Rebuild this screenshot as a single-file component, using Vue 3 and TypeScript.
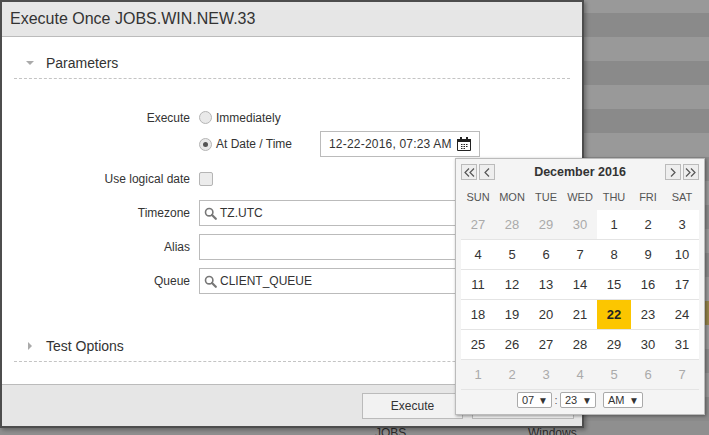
<script setup lang="ts">
interface Day {
  label: number
  outside: boolean
  selected: boolean
}

const weekdays = ['SUN', 'MON', 'TUE', 'WED', 'THU', 'FRI', 'SAT']

const before = [27, 28, 29, 30]
const after = [1, 2, 3, 4, 5, 6, 7]

const days: Day[] = [
  ...before.map((label) => ({ label, outside: true, selected: false })),
  ...Array.from({ length: 31 }, (_, i) => ({ label: i + 1, outside: false, selected: i + 1 === 22 })),
  ...after.map((label) => ({ label, outside: true, selected: false }))
]

// background table stripes behind the modal
const stripes = Array.from({ length: 17 }, (_, i) => i)
</script>

<template>
  <div class="stage">
    <div class="backdrop">
      <div class="stripe first"></div>
      <div
        v-for="i in stripes"
        :key="i"
        class="stripe"
        :class="{ dark: i % 2 === 0, flagged: i === 12 }"
      ></div>
      <div class="stripe last">
        <span class="cell-jobs">JOBS</span>
        <span class="cell-os">Windows</span>
      </div>
    </div>

    <div class="dialog">
      <header class="dialog-head">Execute Once JOBS.WIN.NEW.33</header>

      <div class="dialog-body">
        <div class="section-head">
          <span class="arrow-down"></span>
          <span>Parameters</span>
        </div>

        <div class="form">
          <div class="row">
            <label class="label tall">Execute</label>
            <div class="options">
              <div class="option first-option">
                <span class="radio"></span>
                <span class="nudge-down">Immediately</span>
              </div>
              <div class="option">
                <span class="radio checked"></span>
                <span class="option-text">At Date / Time</span>
                <div class="date-input">
                  <span class="date-value">12-22-2016, 07:23 AM</span>
                  <svg class="cal-icon" width="16" height="16" viewBox="0 0 16 16">
                    <path d="M1.500 3.500h13v11h-13z" fill="none" stroke="#222" stroke-width="1" />
                    <path d="M1 3h14v3H1z" fill="#222" />
                    <path d="M4 1h2v3H4zM10 1h2v3h-2z" fill="#222" />
                    <path d="M5 8h1.500v1H5zM7.500 8H9v1H7.500zM10 8h1.500v1H10zM5 10h1.500v1H5zM7.500 10H9v1H7.500zM10 10h1.500v1H10zM5 12h1.500v1H5zM7.500 12H9v1H7.500z" fill="#222" />
                  </svg>
                </div>
              </div>
            </div>
          </div>

          <div class="row logical">
            <label class="label">Use logical date</label>
            <span class="checkbox"></span>
          </div>

          <div class="row">
            <label class="label">Timezone</label>
            <div class="text-input">
              <svg class="search" width="13" height="13" viewBox="0 0 13 13">
                <circle cx="5.200" cy="5.200" r="3.700" fill="none" stroke="#777" stroke-width="1.600" />
                <path d="M8 8l3.800 3.800" stroke="#777" stroke-width="2.200" stroke-linecap="round" />
              </svg>
              <span>TZ.UTC</span>
            </div>
          </div>

          <div class="row">
            <label class="label">Alias</label>
            <div class="text-input"></div>
          </div>

          <div class="row">
            <label class="label">Queue</label>
            <div class="text-input">
              <svg class="search" width="13" height="13" viewBox="0 0 13 13">
                <circle cx="5.200" cy="5.200" r="3.700" fill="none" stroke="#777" stroke-width="1.600" />
                <path d="M8 8l3.800 3.800" stroke="#777" stroke-width="2.200" stroke-linecap="round" />
              </svg>
              <span>CLIENT_QUEUE</span>
            </div>
          </div>
        </div>

        <div class="section-head test-options">
          <span class="arrow-right"></span>
          <span>Test Options</span>
        </div>
      </div>

      <footer class="dialog-foot">
        <button class="btn">Execute</button>
        <button class="btn"></button>
      </footer>
    </div>

    <!-- Date picker popup -->
    <div class="calendar">
      <div class="cal-head">
        <div class="nav">
          <button class="nav-btn">
            <svg width="11" height="9" viewBox="0 0 11 9"><path d="M5 .5 1 4.500l4 4M10 .5 6 4.500l4 4" fill="none" stroke="#555" stroke-width="1.200" /></svg>
          </button>
          <button class="nav-btn">
            <svg width="6" height="9" viewBox="0 0 6 9"><path d="M5 .5 1 4.500l4 4" fill="none" stroke="#555" stroke-width="1.200" /></svg>
          </button>
        </div>
        <div class="cal-title">December 2016</div>
        <div class="nav">
          <button class="nav-btn">
            <svg width="6" height="9" viewBox="0 0 6 9"><path d="M1 .5l4 4-4 4" fill="none" stroke="#555" stroke-width="1.200" /></svg>
          </button>
          <button class="nav-btn">
            <svg width="11" height="9" viewBox="0 0 11 9"><path d="M1 .5l4 4-4 4M6 .5l4 4-4 4" fill="none" stroke="#555" stroke-width="1.200" /></svg>
          </button>
        </div>
      </div>

      <div class="weekdays">
        <span v-for="w in weekdays" :key="w">{{ w }}</span>
      </div>

      <div class="days">
        <span
          v-for="(d, i) in days"
          :key="i"
          class="day"
          :class="{ outside: d.outside, selected: d.selected }"
        >{{ d.label }}</span>
      </div>

      <div class="time">
        <span class="time-select hour">07<i>▼</i></span>
        <span class="colon">:</span>
        <span class="time-select minute">23<i>▼</i></span>
        <span class="time-select ampm">AM<i>▼</i></span>
      </div>
    </div>
  </div>
</template>

<style>
html,
body {
  margin: 0;
  padding: 0;
}
</style>

<style scoped>
.stage {
  position: relative;
  width: 709px;
  height: 435px;
  overflow: hidden;
  font-family: "Liberation Sans", Arial, sans-serif;
  font-size: 12px;
  color: #333;
}

.backdrop {
  display: flex;
  flex-direction: column;
  height: 100%;
  background: #999;
}

.stripe {
  flex: 0 0 24px;
  background: #999;
  position: relative;
}

.stripe.first {
  flex-basis: 13px;
}

.stripe.dark {
  background: #8a8a8a;
}

.stripe.flagged {
  background: #94834a;
}

.stripe.last {
  background: #8f8f8f;
  color: #2b2b2b;
}

.cell-jobs {
  position: absolute;
  left: 375px;
  top: 5px;
}

.cell-os {
  position: absolute;
  left: 528px;
  top: 5px;
}

.dialog {
  position: absolute;
  left: 0;
  top: 0;
  width: 584px;
  height: 428px;
  box-sizing: border-box;
  display: flex;
  flex-direction: column;
  background: #fff;
  border: 2px solid #4d4d4d;
  box-shadow: 2px 2px 4px rgba(0, 0, 0, 0.3);
}

.dialog-head {
  height: 34px;
  line-height: 34px;
  padding-left: 8px;
  font-size: 16px;
  color: #333;
  background: #e6e6e6;
  border-bottom: 1px solid #bbb;
}

.dialog-body {
  flex: 1;
  padding: 10px 12px 0;
}

.section-head {
  display: flex;
  align-items: center;
  height: 31px;
  font-size: 14px;
  color: #333;
  border-bottom: 1px dashed #c4c4c4;
}

.arrow-down {
  width: 0;
  height: 0;
  margin: 0 12px;
  border-left: 4px solid transparent;
  border-right: 4px solid transparent;
  border-top: 4px solid #aaa;
}

.arrow-right {
  width: 0;
  height: 0;
  margin: 0 14px;
  border-top: 4px solid transparent;
  border-bottom: 4px solid transparent;
  border-left: 4px solid #aaa;
}

.form {
  display: flex;
  flex-direction: column;
  gap: 8px;
  margin-top: 26px;
}

.row {
  display: flex;
  align-items: center;
}

.row:first-child {
  align-items: flex-start;
}

.logical {
  height: 27px;
}

.label {
  flex: 0 0 176px;
  margin-right: 9px;
  text-align: right;
}

.label.tall {
  line-height: 26px;
}

.options {
  display: flex;
  flex-direction: column;
  gap: 2px;
}

.option {
  display: flex;
  align-items: center;
  height: 26px;
}

.first-option {
  height: 24px;
}

.nudge-down {
  padding-top: 1px;
}

.radio {
  width: 13px;
  height: 13px;
  margin-right: 4px;
  box-sizing: border-box;
  border: 1px solid #b5b5b5;
  border-radius: 50%;
  background: #e9e9e9;
  display: flex;
  align-items: center;
  justify-content: center;
}

.radio.checked::after {
  content: "";
  width: 5px;
  height: 5px;
  border-radius: 50%;
  background: #555;
}

.option-text {
  width: 104px;
  padding-bottom: 1px;
}

.date-input {
  width: 160px;
  height: 26px;
  box-sizing: border-box;
  display: flex;
  align-items: center;
  justify-content: space-between;
  padding: 0 7px 0 8px;
  background: #fff;
  border: 1px solid #bbb;
}

.date-value {
  letter-spacing: 0.2px;
}

.cal-icon {
  display: block;
}

.checkbox {
  width: 14px;
  height: 14px;
  box-sizing: border-box;
  background: #ececec;
  border: 1px solid #b5b5b5;
  border-radius: 2px;
}

.text-input {
  flex: 1;
  height: 26px;
  box-sizing: border-box;
  display: flex;
  align-items: center;
  padding-left: 4px;
  background: #fff;
  border: 1px solid #bbb;
}

.search {
  margin-right: 3px;
}

.test-options {
  margin-top: 36px;
}

.dialog-foot {
  height: 42px;
  box-sizing: border-box;
  display: flex;
  justify-content: flex-end;
  gap: 9px;
  padding: 8px 8px 0;
  background: #e6e6e6;
  border-top: 1px solid #bbb;
}

.btn {
  width: 102px;
  height: 26px;
  padding: 0;
  font: inherit;
  color: #333;
  background: #f2f2f2;
  border: 1px solid #bbb;
}

.btn:first-child {
  width: 101px;
}

.calendar {
  position: absolute;
  left: 455px;
  top: 158px;
  width: 250px;
  height: 257px;
  box-sizing: border-box;
  padding: 5px 5px 0;
  background: #f4f4f4;
  border: 1px solid #bbb;
  box-shadow: 1px 1px 3px rgba(0, 0, 0, 0.4);
}

.cal-head {
  display: flex;
  align-items: center;
  justify-content: space-between;
  height: 16px;
}

.nav {
  display: flex;
  gap: 2px;
}

.nav-btn {
  width: 16px;
  height: 16px;
  padding: 0;
  display: flex;
  align-items: center;
  justify-content: center;
  background: #eee;
  border: 1px solid #bbb;
}

.cal-title {
  font-size: 12.500px;
  font-weight: bold;
  color: #333;
}

.weekdays {
  display: grid;
  grid-template-columns: repeat(7, 34px);
  height: 30px;
  align-items: center;
  padding-top: 3px;
  box-sizing: border-box;
  font-size: 11px;
  color: #555;
  text-align: center;
}

.days {
  display: grid;
  grid-template-columns: repeat(7, 34px);
  grid-auto-rows: 30px;
}

.day {
  box-sizing: border-box;
  display: flex;
  align-items: center;
  justify-content: center;
  font-size: 13px;
  background: #fff;
  border-bottom: 1px solid #e4e4e4;
}

.day.outside {
  color: #aaa;
  background: #f4f4f4;
}

.day.selected {
  font-weight: bold;
  color: #222;
  background: #fcc600;
}

.time {
  display: flex;
  align-items: center;
  margin-top: 2px;
  padding-left: 56px;
  font-size: 11px;
}

.time-select {
  height: 16px;
  box-sizing: border-box;
  padding: 0 3px 0 4px;
  display: flex;
  justify-content: space-between;
  align-items: center;
  background: #fff;
  border: 1px solid #aaa;
  border-radius: 2px;
}

.time-select i {
  font-style: normal;
  font-size: 10px;
}

.hour,
.minute {
  width: 35px;
}

.minute {
  width: 36px;
}

.ampm {
  width: 40px;
  margin-left: 7px;
}

.colon {
  width: 8px;
  text-align: center;
  color: #555;
}
</style>
